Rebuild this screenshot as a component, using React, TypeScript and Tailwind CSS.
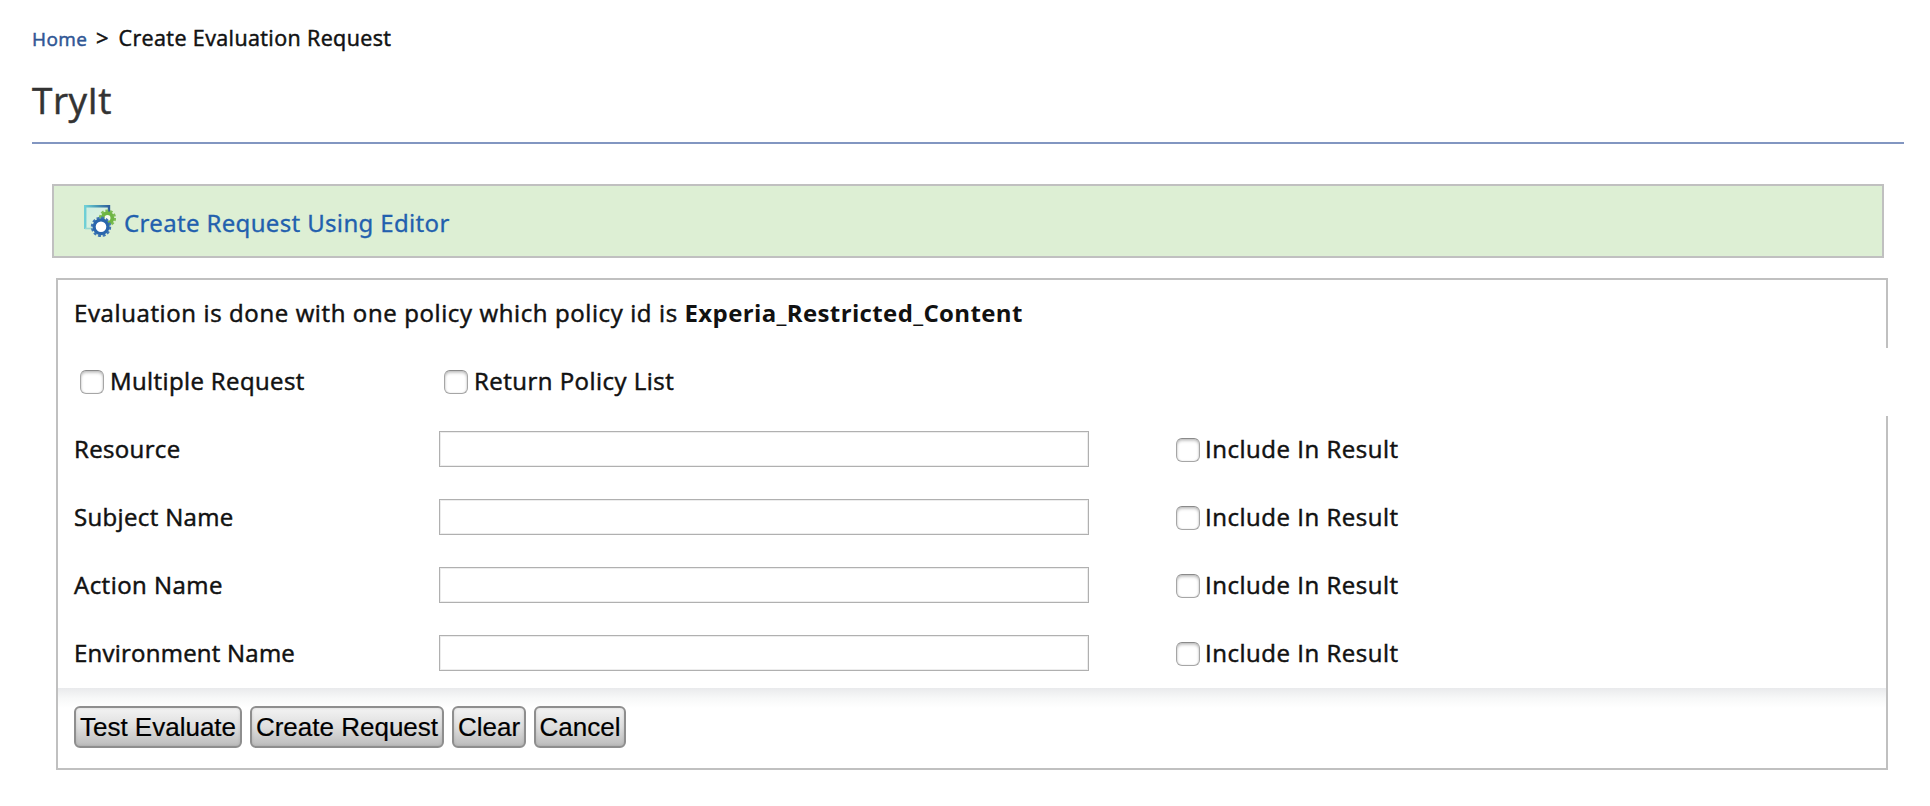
import type { ReactNode } from "react";

function Checkbox() {
  return (
    <input
      type="checkbox"
      className="size-6 shrink-0 appearance-none rounded-[6px] border border-[#a6a6a6] border-t-[#8a8a8a] bg-white shadow-[inset_0_2px_3px_rgba(0,0,0,0.22),inset_0_0_2px_rgba(0,0,0,0.12)]"
    />
  );
}

function GearsIcon() {
  return (
    <svg viewBox="0 0 32 32" className="size-8 shrink-0">
      <defs>
        <linearGradient id="frame" x1="0" y1="0" x2="1" y2="0">
          <stop offset="0" stopColor="#6fd0d6" />
          <stop offset="0.45" stopColor="#4a9fb8" />
          <stop offset="1" stopColor="#2f5f9c" />
        </linearGradient>
        <linearGradient id="pane" x1="0" y1="0" x2="1" y2="1">
          <stop offset="0" stopColor="#cdeee2" />
          <stop offset="1" stopColor="#e2f3dc" />
        </linearGradient>
      </defs>
      <path d="M1 1H25V23.5H1Z" fill="url(#pane)" />
      <path d="M1.2 24V1.2H25V9" fill="none" stroke="url(#frame)" strokeWidth="2.4" />
      <path d="M1 23.5H8" fill="none" stroke="#9bd8d0" strokeWidth="1.6" />
      <circle cx="23.5" cy="13" r="7.4" fill="none" stroke="#7dbd55" strokeWidth="2.4" strokeDasharray="2.8 1.85" />
      <circle cx="23.5" cy="13" r="4.9" fill="#f4fbef" stroke="#6fb643" strokeWidth="3.8" />
      <circle cx="17" cy="21.8" r="9" fill="none" stroke="#3f76b4" strokeWidth="2.4" strokeDasharray="2.9 1.81" />
      <circle cx="17" cy="21.8" r="6.9" fill="#ffffff" stroke="#2a66ac" strokeWidth="3.2" />
    </svg>
  );
}

function Row({ children }: { children: ReactNode }) {
  return <div className="flex h-[68px] items-center">{children}</div>;
}

const fields = [
  { label: "Resource", tracking: "tracking-[0.35px]" },
  { label: "Subject Name", tracking: "tracking-[0.35px]" },
  { label: "Action Name", tracking: "tracking-[0.47px]" },
  { label: "Environment Name", tracking: "tracking-[0.23px]" },
];

const buttons = [
  { label: "Test Evaluate", width: "w-[168px]" },
  { label: "Create Request", width: "w-[194px]" },
  { label: "Clear", width: "w-[74px]" },
  { label: "Cancel", width: "w-[92px]" },
];

export default function App() {
  return (
    <div className="h-[806px] w-[1930px] overflow-hidden bg-white font-['Open_Sans','Noto_Sans',sans-serif] text-[#111111] [-webkit-text-stroke:0.5px]">
      <nav className="flex h-[53px] items-baseline pt-[22px] pl-8 text-[21.5px] leading-[30px] whitespace-pre">
        <a href="#" className="w-[64px] text-[19px] tracking-[0.4px] text-[#2f5694]">Home</a>
        <span className="w-[22.5px] text-[22px]">&gt;</span>
        <span className="tracking-[0.38px]">Create Evaluation Request</span>
      </nav>
      <h1 className="mt-[22px] ml-8 h-[69px] w-[1872px] border-b-2 border-[#8296c1] text-[37px] leading-[50px] tracking-[0.5px] text-[#333333]">
        TryIt
      </h1>

      <div className="mt-10 ml-[52px] flex h-[74px] w-[1832px] items-center border-2 border-[#c0c0c0] bg-[#ddefd4] pl-[30px]">
        <GearsIcon />
        <a
          href="#"
          className="ml-2 pt-[3px] font-['Noto_Sans',sans-serif] text-[24px] leading-8 tracking-[0.34px] text-[#2260ae] [-webkit-text-stroke:0.3px]"
        >
          Create Request Using Editor
        </a>
      </div>

      <form className="mt-5 ml-14 h-[492px] w-[1832px] border-2 border-[#c0c0c0] text-[24px] leading-8">
        <div className="flex h-[68px] items-center pb-[3px] pl-4 whitespace-pre">
          <span className="tracking-[0.61px]">Evaluation is done with one policy which policy id is </span>
          <b className="tracking-[0.37px] [-webkit-text-stroke:0px]">Experia_Restricted_Content</b>
        </div>
        <div className="-mr-0.5 flex h-[68px] items-center bg-white pl-[22px]">
          <label className="flex w-[364px] items-center gap-1.5">
            <Checkbox />
            <span className="pb-[3px] tracking-[0.38px]">Multiple Request</span>
          </label>
          <label className="flex items-center gap-1.5">
            <Checkbox />
            <span className="pb-[3px] tracking-[0.48px]">Return Policy List</span>
          </label>
        </div>
        {fields.map((f) => (
          <Row key={f.label}>
            <span className={`w-[381px] pb-[3px] pl-4 ${f.tracking}`}>{f.label}</span>
            <input
              type="text"
              className="mb-0.5 h-9 w-[650px] border border-[#b0b0b0] bg-white px-1 shadow-[inset_0_0_0_1px_#ededed] outline-none"
            />
            <label className="ml-[87px] flex items-center gap-[5px]">
              <Checkbox />
              <span className="pb-[3px] tracking-[0.52px]">Include In Result</span>
            </label>
          </Row>
        ))}
        <div className="flex h-20 gap-2 bg-linear-to-b from-[#e9eaec] via-[#f7f8f8] via-[10px] to-white to-[20px] pt-[18px] pl-4">
          {buttons.map((b) => (
            <button
              key={b.label}
              type="button"
              className={`${b.width} h-[42px] rounded-[6px] border-2 border-[#8e8e8e] bg-linear-to-b from-[#f3f3f3] via-[#dedede] to-[#bcbcbc] text-center font-['Liberation_Sans',sans-serif] text-[26px] leading-[38px] whitespace-nowrap text-black shadow-[inset_0_0_3px_rgba(0,0,0,0.12)] [-webkit-text-stroke:0.2px]`}
            >
              {b.label}
            </button>
          ))}
        </div>
      </form>
    </div>
  );
}
